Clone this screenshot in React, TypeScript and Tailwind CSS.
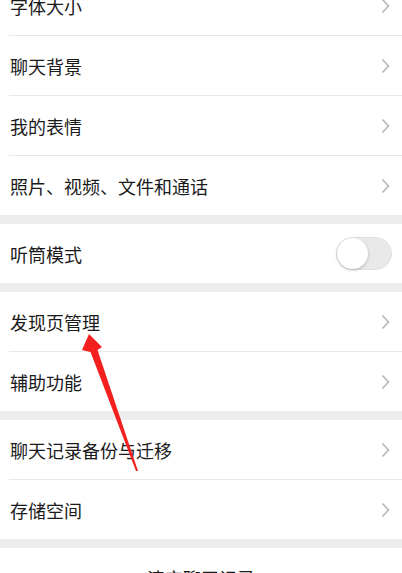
import React from "react";

const font = { fontFamily: '"Noto Sans CJK SC", "Noto Sans", sans-serif' };

function Chevron() {
  return (
    <svg width="9" height="16" viewBox="0 0 9 16" className="shrink-0">
      <path d="M1.5 1.5 L7.5 8 L1.5 14.5" fill="none" stroke="#b5b5b5" strokeWidth="1.5" />
    </svg>
  );
}

function Row({ label, last }: { label: string; last?: boolean }) {
  return (
    <>
      <div className="h-[59px] flex items-center justify-between pl-[10px] pr-[12px]">
        <span className="text-[18px] text-[#1a1a1a] leading-none">{label}</span>
        <Chevron />
      </div>
      {!last && <div className="h-px bg-[#e8e8e8] ml-[9px]" />}
    </>
  );
}

function Gap() {
  return <div className="h-[9px] bg-[#ededed]" />;
}

export default function App() {
  return (
    <div className="relative w-full h-[573px] overflow-hidden bg-[#ededed]" style={font}>
      <div className="-mt-[24px]">
        <div className="bg-white">
          <Row label="字体大小" />
          <Row label="聊天背景" />
          <Row label="我的表情" />
          <Row label="照片、视频、文件和通话" last />
        </div>
        <Gap />
        <div className="bg-white h-[59px] flex items-center justify-between pl-[10px] pr-[10px]">
          <span className="text-[18px] text-[#1a1a1a] leading-none">听筒模式</span>
          <div className="relative w-[56px] h-[33px] rounded-full bg-[#e9e9e9] border border-[#e0e0e0]">
            <div className="absolute left-0 top-0 w-[31px] h-[31px] rounded-full bg-white shadow-[0_1px_3px_rgba(0,0,0,0.25)]" />
          </div>
        </div>
        <Gap />
        <div className="bg-white">
          <Row label="发现页管理" />
          <Row label="辅助功能" last />
        </div>
        <Gap />
        <div className="bg-white">
          <Row label="聊天记录备份与迁移" />
          <Row label="存储空间" last />
        </div>
        <Gap />
        <div className="bg-white h-[59px] flex items-center justify-center">
          <span className="text-[18px] text-[#1a1a1a] leading-none">清空聊天记录</span>
        </div>
      </div>
      <svg className="absolute left-0 top-0 pointer-events-none" width="402" height="573" viewBox="0 0 402 573">
        <polygon points="89,334 102,347 97.5,350 138,471 136,471 90.5,352 82,350" fill="#f41f1f" />
      </svg>
    </div>
  );
}
